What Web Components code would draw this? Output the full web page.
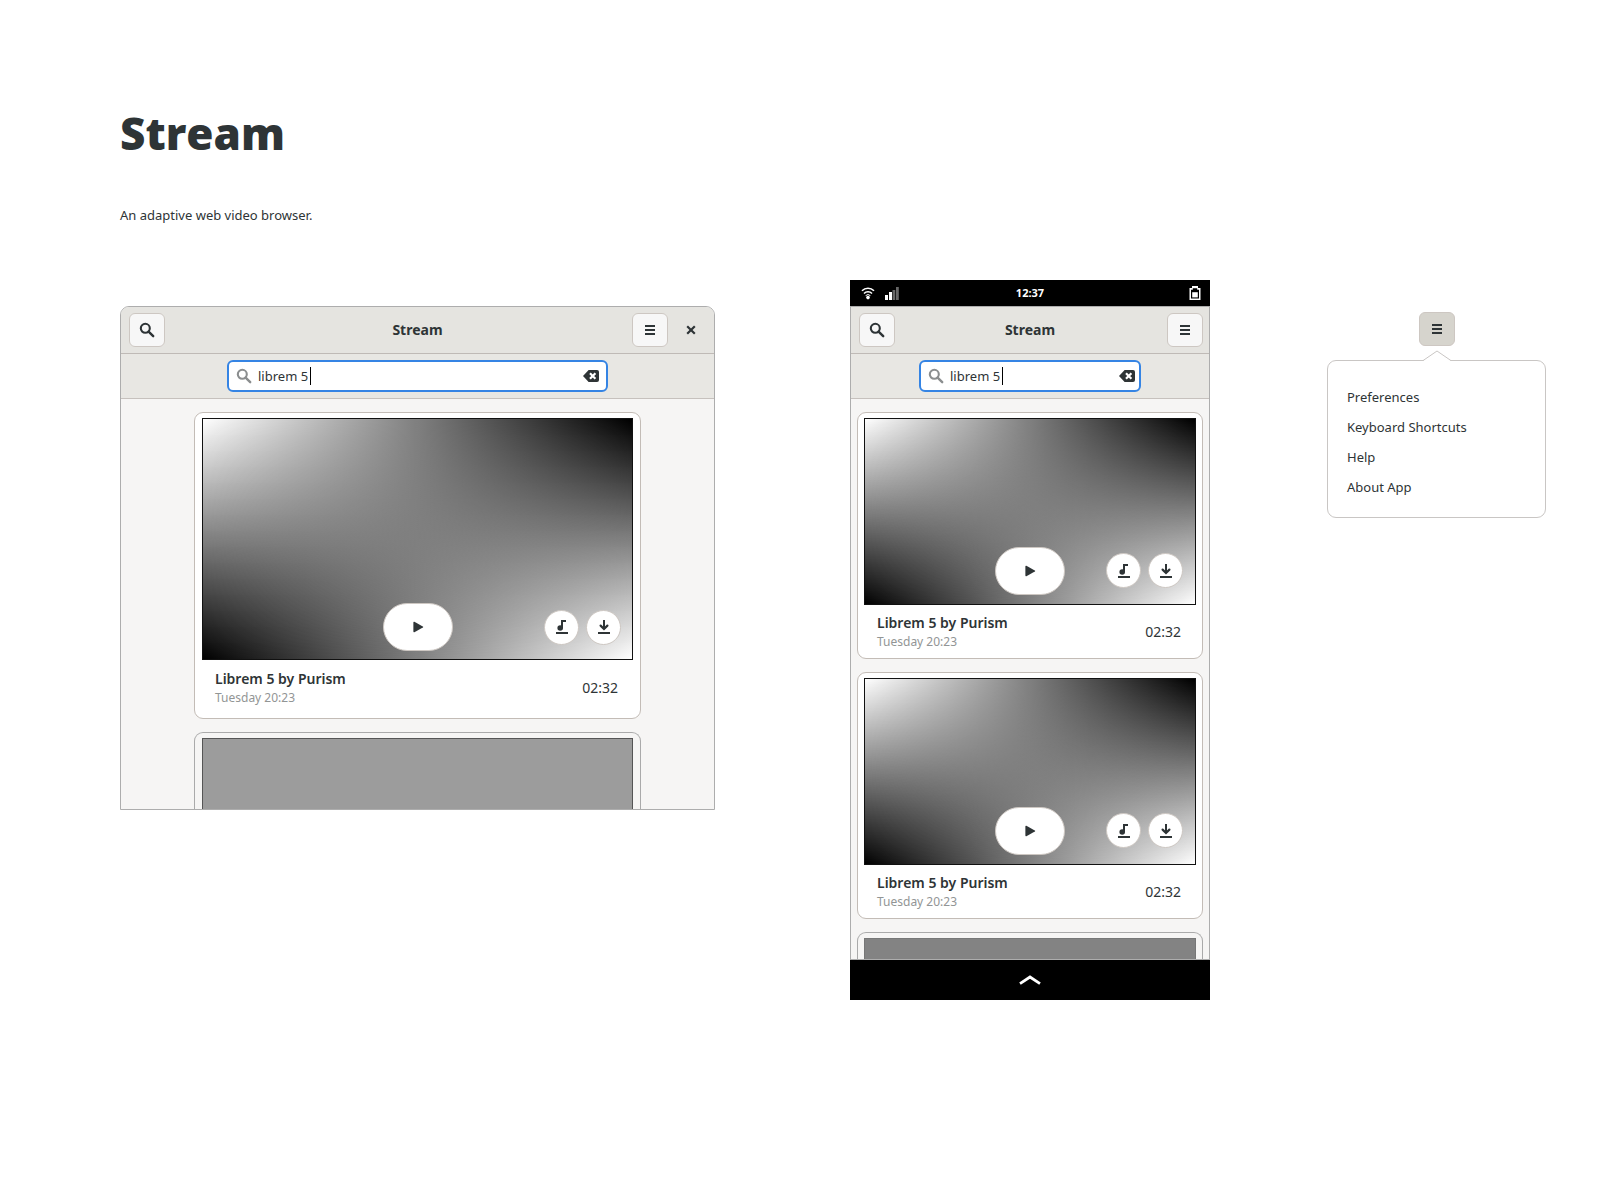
<!DOCTYPE html>
<html lang="en">
<head>
<meta charset="utf-8">
<title>Stream</title>
<style>
  body {
    margin: 0;
    background: #fff;
    color: #2e3436;
    font: 13px/20px "Noto Sans", "Open Sans", sans-serif;
  }
</style>
</head>
<body>
<stream-page></stream-page>

<script>
const ICONS = {
  search: '<circle cx="6.3" cy="6.3" r="4.5" fill="none" stroke="currentColor" stroke-width="2.1"/><path d="M9.6 9.6l4.6 4.6" stroke="currentColor" stroke-width="2.4" stroke-linecap="round"/>',
  menu: '<path d="M3 3h10v2H3zM3 7h10v2H3zM3 11h10v2H3z" fill="currentColor"/>',
  close: '<path d="M4.2 4.2l7.6 7.6M11.8 4.2l-7.6 7.6" stroke="currentColor" stroke-width="2.2"/>',
  clear: '<path d="M5.6 2H14a2 2 0 0 1 2 2v8a2 2 0 0 1-2 2H5.6L0 8z" fill="currentColor"/><path d="M7 5.2l5.4 5.6M12.4 5.2L7 10.8" stroke="#fff" stroke-width="2.2"/>',
  play: '<path d="M3.4 3.4a.7.7 0 0 1 1-.6l8.4 4.6a.7.7 0 0 1 0 1.2l-8.4 4.6a.7.7 0 0 1-1-.6z" fill="currentColor"/>',
  audio: '<path d="M2 13h12v2H2zM7 1h5v2H9v6H7z" fill="currentColor"/><circle cx="6.2" cy="9" r="2.8" fill="currentColor"/>',
  download: '<path d="M2 13h12v2H2zM7 1h2v7.5H7z" fill="currentColor"/><path d="M4.6 6.6L8 10l3.4-3.4" fill="none" stroke="currentColor" stroke-width="2.2" stroke-linecap="round"/>',
  wifi: '<g fill="none" stroke="currentColor" stroke-width="1.6"><path d="M2 5.8a8.4 8.4 0 0 1 12 0"/><path d="M4 8.5a5.6 5.6 0 0 1 8 0"/></g><path d="M5.6 10.6a3.6 3.6 0 0 1 4.8 0" fill="none" stroke="currentColor" stroke-width="1"/><circle cx="8" cy="12.6" r="1.8" fill="currentColor"/>',
  signal: '<path d="M1 10h3v5H1zM5 7h3v8H5z" fill="currentColor"/><path d="M8.5 5h2.8v10H8.5zM12 2h2.8v13H12z" fill="#666"/>',
  battery: '<path d="M5 1h6v2h2.5v12h-11V3H5z" fill="currentColor"/><path d="M5.8 3.2h4.4v1.6H12v8.8H4V4.8h1.8z" fill="#000"/><path d="M5.2 7.2h5.6v5.2H5.2z" fill="currentColor"/>',
  up: '<path d="M-2 11.6L8 5l10 6.6" fill="none" stroke="currentColor" stroke-width="2.8"/>'
};

class StreamElement extends HTMLElement {
  constructor() {
    super();
    this.attachShadow({ mode: 'open' });
  }
  connectedCallback() {
    this.shadowRoot.innerHTML = `<style>*{box-sizing:border-box}:host{box-sizing:border-box}${this.styles()}</style>${this.markup()}`;
  }
}

customElements.define('app-icon', class extends StreamElement {
  styles() {
    return `
      :host { display: block; width: 16px; height: 16px; }
      svg { display: block; overflow: visible; }`;
  }
  markup() {
    return `<svg width="16" height="16" viewBox="0 0 16 16" aria-hidden="true">${ICONS[this.getAttribute('name')]}</svg>`;
  }
});

customElements.define('icon-button', class extends StreamElement {
  styles() {
    return `
      :host { display: block; }
      button {
        display: flex; align-items: center; justify-content: center;
        width: 36px; height: 34px; padding: 0;
        border: 1px solid #cdc7c2; border-radius: 6px;
        background: #f7f7f7; color: inherit;
      }
      :host([kind="flat"]) button { width: 30px; border-color: transparent; background: none; }
      :host([kind="active"]) button { background: #d6d4cd; }
      :host([kind="round"]) button { width: 35px; height: 35px; border-radius: 50%; background: #fff; }
      :host([kind="pill"]) button { width: 70px; height: 48px; border-radius: 24px; background: #fff; }`;
  }
  markup() {
    return `<button type="button" aria-label="${this.getAttribute('label')}"><app-icon name="${this.getAttribute('icon')}"></app-icon></button>`;
  }
});

customElements.define('header-bar', class extends StreamElement {
  styles() {
    return `
      :host {
        display: grid; grid-template-columns: 1fr auto 1fr; align-items: center;
        height: 47px; padding: 0 6px;
        background: #e5e4e0; border-bottom: 1px solid #bfbab6;
      }
      h2 { margin: 0; font-size: 14px; line-height: 20px; font-weight: 700; }
      div { display: flex; gap: 8px; }
      .start { padding-left: 2px; }
      .end { justify-content: flex-end; padding-right: 2px; }
      :host([narrow]) .end { padding-right: 0; }`;
  }
  markup() {
    return `
      <div class="start"><icon-button icon="search" label="Search"></icon-button></div>
      <h2><slot></slot></h2>
      <div class="end"><icon-button icon="menu" label="Menu"></icon-button><slot name="end"></slot></div>`;
  }
});

customElements.define('search-bar', class extends StreamElement {
  styles() {
    return `
      :host {
        display: flex; justify-content: center; padding: 6px;
        background: #e8e7e3; border-bottom: 1px solid #c6c1bd;
      }
      .entry {
        display: flex; align-items: center; gap: 6px;
        width: 100%; max-width: var(--entry-width, 381px); height: 32px; padding: 0 var(--entry-end, 7px) 0 7px;
        border: 2px solid #3584e4; border-radius: 6px; background: #fff;
      }
      .glyph { color: #8b8e8f; }
      .text { display: flex; flex: 1; align-items: center; min-width: 0; }
      input {
        field-sizing: content; max-width: 100%; padding: 0; border: 0; outline: 0;
        background: none; color: inherit; font: inherit;
      }
      .caret { width: 1px; height: 18px; margin-left: 2px; background: #000; }
      button { padding: 0; border: 0; background: none; color: inherit; }`;
  }
  markup() {
    return `
      <div class="entry">
        <app-icon class="glyph" name="search"></app-icon>
        <span class="text"><input type="text" aria-label="Search videos" value="${this.getAttribute('value')}"><span class="caret"></span></span>
        <button type="button" aria-label="Clear"><app-icon name="clear"></app-icon></button>
      </div>`;
  }
});

customElements.define('video-card', class extends StreamElement {
  styles() {
    return `
      :host {
        display: block; width: 100%; max-width: 447px; padding: 5px var(--card-pad, 7px) 0;
        border: 1px solid #c3bcb6; border-radius: 9px; background: #fff;
      }
      .preview {
        position: relative; aspect-ratio: 16 / 9; border: 1px solid #111;
        background: linear-gradient(to right, #fff, #000);
      }
      .preview::before {
        content: ""; position: absolute; inset: 0;
        background: linear-gradient(to right, #000, #fff);
        -webkit-mask-image: linear-gradient(to bottom, transparent, #000);
        mask-image: linear-gradient(to bottom, transparent, #000);
      }
      .controls {
        position: absolute; inset: auto var(--control-side, 11px) var(--control-bottom, 8px);
        display: grid; grid-template-columns: 1fr auto 1fr; align-items: center;
      }
      .actions { grid-column: 3; display: flex; justify-content: flex-end; gap: 7px; }
      icon-button[kind="pill"] { grid-column: 2; }
      .info {
        display: flex; align-items: center; justify-content: space-between;
        padding: var(--info-top, 9px) 15px var(--info-bottom, 11px) 13px;
      }
      h3 { margin: 0; font-size: 14px; line-height: 20px; font-weight: 600; }
      p { margin: 0; font-size: 12px; line-height: 18px; color: #929595; }
      time { font-size: 14px; line-height: 20px; }`;
  }
  markup() {
    return `
      <div class="preview">
        <div class="controls">
          <icon-button kind="pill" icon="play" label="Play"></icon-button>
          <div class="actions">
            <icon-button kind="round" icon="audio" label="Save audio"></icon-button>
            <icon-button kind="round" icon="download" label="Download"></icon-button>
          </div>
        </div>
      </div>
      <div class="info">
        <div><h3><slot></slot></h3><p>${this.getAttribute('date')}</p></div>
        <time>${this.getAttribute('length')}</time>
      </div>`;
  }
});

customElements.define('loading-card', class extends StreamElement {
  styles() {
    return `
      :host {
        display: flex; flex: 1; width: 100%; max-width: 447px; min-height: 0;
        padding: 5px var(--card-pad, 7px) 0;
        border: 1px solid #aaa; border-bottom: 0; border-radius: 9px 9px 0 0;
      }
      div { flex: 1; background: var(--blank, #9c9c9c); border: 1px solid var(--blank-edge, #555); border-bottom: 0; }`;
  }
  markup() { return `<div></div>`; }
});

customElements.define('desktop-window', class extends StreamElement {
  styles() {
    return `
      :host {
        display: block; overflow: hidden;
        border: 1px solid #adadad; border-radius: 9px 9px 0 0; background: #f6f5f4;
      }
      .list { display: flex; flex-direction: column; align-items: center; gap: 13px; padding: 13px 13px 0; }
      loading-card { flex: none; height: 77px; }`;
  }
  markup() {
    return `
      <header-bar>Stream<icon-button slot="end" kind="flat" icon="close" label="Close"></icon-button></header-bar>
      <search-bar value="librem 5"></search-bar>
      <div class="list">
        <video-card date="Tuesday 20:23" length="02:32">Librem 5 by Purism</video-card>
        <loading-card></loading-card>
      </div>`;
  }
});

customElements.define('phone-screen', class extends StreamElement {
  styles() {
    return `
      :host {
        display: flex; flex-direction: column; aspect-ratio: 1 / 2; overflow: hidden;
        --entry-width: 222px; --entry-end: 4px; --card-pad: 6px;
        --info-top: 8px; --info-bottom: 7px; --control-side: 12px; --control-bottom: 9px;
        --blank: #838383; --blank-edge: #777;
      }
      .status {
        display: grid; grid-template-columns: 1fr auto 1fr; align-items: center;
        height: 26px; padding: 0 7px; background: #000; color: #fff;
        font-size: 11px; font-weight: 700;
      }
      .left { display: flex; gap: 8px; padding-left: 3px; }
      .right { display: flex; justify-content: flex-end; }
      .app {
        display: flex; flex: 1; flex-direction: column; min-height: 0;
        border: 1px solid #adadad; background: #f6f5f4;
      }
      .list { display: flex; flex: 1; flex-direction: column; gap: 13px; min-height: 0; padding: 13px 6px 0; }
      video-card { flex: none; }
      nav { display: flex; justify-content: center; background: #000; }
      nav button { width: 60px; height: 40px; padding: 0 22px; border: 0; background: none; color: #fff; }`;
  }
  markup() {
    const card = '<video-card date="Tuesday 20:23" length="02:32">Librem 5 by Purism</video-card>';
    return `
      <div class="status">
        <span class="left"><app-icon name="wifi"></app-icon><app-icon name="signal"></app-icon></span>
        <time>12:37</time>
        <span class="right"><app-icon name="battery"></app-icon></span>
      </div>
      <div class="app">
        <header-bar narrow>Stream</header-bar>
        <search-bar value="librem 5"></search-bar>
        <div class="list">${card}${card}<loading-card></loading-card></div>
      </div>
      <nav><button type="button" aria-label="Show overview"><app-icon name="up"></app-icon></button></nav>`;
  }
});

customElements.define('app-menu', class extends StreamElement {
  styles() {
    return `
      :host { display: flex; flex-direction: column; align-items: center; gap: 14px; }
      nav {
        position: relative; width: 100%; padding: 21px 19px 15px;
        border: 1px solid #c9c6c4; border-radius: 9px; background: #fff;
      }
      svg { position: absolute; left: 50%; top: -11px; margin-left: -14px; }
      ul { margin: 0; padding: 0; list-style: none; }
      a { display: block; line-height: 30px; color: inherit; text-decoration: none; }`;
  }
  markup() {
    const items = ['Preferences', 'Keyboard Shortcuts', 'Help', 'About App'];
    return `
      <icon-button kind="active" icon="menu" label="Menu"></icon-button>
      <nav>
        <svg width="28" height="11" viewBox="0 0 28 11" aria-hidden="true"><path d="M0 11L14 1l14 10z" fill="#fff"/><path d="M0 10.6L14 1l14 9.6" fill="none" stroke="#c9c6c4"/></svg>
        <ul>${items.map(t => `<li><a href="#">${t}</a></li>`).join('')}</ul>
      </nav>`;
  }
});

customElements.define('stream-page', class extends StreamElement {
  styles() {
    return `
      :host { display: block; padding: 101px 54px 100px 120px; }
      h1 { margin: 0 0 40px; font: 800 44px/64px "Open Sans", "Noto Sans", sans-serif; }
      p { margin: 0 0 55px; }
      .mockups {
        display: grid; grid-template-columns: minmax(0, 1fr) 360px 219px;
        column-gap: 117px; align-items: start;
      }
      desktop-window { margin: 26px 18px 0 0; }
      app-menu { margin-top: 32px; }`;
  }
  markup() {
    return `
      <header><h1>Stream</h1><p>An adaptive web video browser.</p></header>
      <main class="mockups">
        <desktop-window></desktop-window>
        <phone-screen></phone-screen>
        <app-menu></app-menu>
      </main>`;
  }
});
</script>
</body>
</html>
